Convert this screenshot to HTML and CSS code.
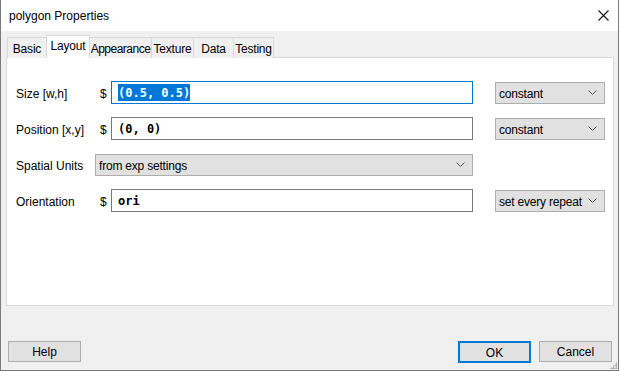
FILE: index.html
```html
<!DOCTYPE html>
<html lang="en">
<head>
  <meta charset="UTF-8">
  <title>polygon Properties</title>
  <link rel="stylesheet" href="styles.css">
</head>
<body>

<div class="window">
  <div class="titlebar">
    <span class="title">polygon Properties</span>
    <svg class="close" width="11" height="11" viewBox="0 0 11 11">
      <path d="M0.5 0.5 L10.5 10.5 M10.5 0.5 L0.5 10.5" stroke="#111" stroke-width="1.1" fill="none"/>
    </svg>
  </div>

  <div class="body">
    <ul class="tabs">
      <li class="tab tab-basic">Basic</li>
      <li class="tab tab-layout current">Layout</li>
      <li class="tab tab-appearance">Appearance</li>
      <li class="tab tab-texture">Texture</li>
      <li class="tab tab-data">Data</li>
      <li class="tab tab-testing">Testing</li>
    </ul>

    <div class="panel">
      <div class="form">
        <label class="lbl">Size [w,h]</label>
        <span class="dollar">$</span>
        <div class="field focus"><span class="sel">(0.5, 0.5)</span></div>
        <span></span>
        <div class="combo small"><span>constant</span>
          <svg class="chev" width="9" height="5" viewBox="0 0 9 5"><polyline points="0.5,0.5 4.5,4.5 8.5,0.5" fill="none" stroke="#555" stroke-width="1"/></svg>
        </div>

        <label class="lbl">Position [x,y]</label>
        <span class="dollar">$</span>
        <div class="field">(0, 0)</div>
        <span></span>
        <div class="combo small"><span>constant</span>
          <svg class="chev" width="9" height="5" viewBox="0 0 9 5"><polyline points="0.5,0.5 4.5,4.5 8.5,0.5" fill="none" stroke="#555" stroke-width="1"/></svg>
        </div>

        <label class="lbl">Spatial Units</label>
        <div class="combo wide"><span>from exp settings</span>
          <svg class="chev" width="9" height="5" viewBox="0 0 9 5"><polyline points="0.5,0.5 4.5,4.5 8.5,0.5" fill="none" stroke="#555" stroke-width="1"/></svg>
        </div>
        <span></span>
        <span></span>

        <label class="lbl">Orientation</label>
        <span class="dollar">$</span>
        <div class="field">ori</div>
        <span></span>
        <div class="combo small"><span>set every repeat</span>
          <svg class="chev" width="9" height="5" viewBox="0 0 9 5"><polyline points="0.5,0.5 4.5,4.5 8.5,0.5" fill="none" stroke="#555" stroke-width="1"/></svg>
        </div>
      </div>
    </div>

    <div class="footer">
      <button class="btn">Help</button>
      <div class="spacer"></div>
      <button class="btn default">OK</button>
      <button class="btn">Cancel</button>
    </div>
    <div class="grip"></div>
  </div>
</div>

</body>
</html>
```

FILE: styles.css
```css
* {
  margin: 0;
  padding: 0;
  list-style: none;
  box-sizing: border-box;
}

body {
  width: 620px;
  height: 371px;
  overflow: hidden;
  font-family: "Segoe UI", "Liberation Sans", Arial, sans-serif;
  font-size: 12px;
  color: #000;
  background-color: #fff;
}

.window {
  width: 619px;
  height: 371px;
  border: 1px solid #7a7a7a;
  border-top: none;
  background-color: #f0f0f0;
  display: flex;
  flex-direction: column;
}

.titlebar {
  height: 31px;
  background-color: #fff;
  display: flex;
  align-items: center;
  justify-content: space-between;
  padding: 0 9px 0 8px;
}

.title {
  font-size: 12px;
}

.close {
  display: block;
  margin-top: -1px;
}

.body {
  flex: 1;
  position: relative;
  padding: 5px 4px 0 5px;
}

/* tabs sit on top of the panel border */
.tabs {
  display: flex;
  height: 22px;
  padding-left: 2px;
  align-items: flex-end;
  position: relative;
  z-index: 1;
  margin-bottom: -1px;
  letter-spacing: -0.2px;
}

.tab {
  height: 21px;
  line-height: 21px;
  padding-top: 1px;
  text-align: center;
  white-space: nowrap;
  border: 1px solid #d9d9d9;
  border-bottom: none;
  margin-left: -1px;
  background-color: #f0f0f0;
}

.tab-basic { width: 40px; }
.tab-layout { width: 44px; }
.tab-appearance { width: 63px; letter-spacing: -0.5px; }
.tab-texture { width: 43px; }
.tab-data { width: 41px; }
.tab-testing { width: 41px; }

.tab.current {
  height: 23px;
  line-height: 20px;
  padding-top: 0;
  background-color: #fff;
  position: relative;
  z-index: 2;
}

.panel {
  height: 249px;
  background-color: #fff;
  border: 1px solid #d9d9d9;
  padding: 23px 9px 0 9px;
}

.form {
  display: grid;
  grid-template-columns: 79px 16px 362px 22px 110px;
  grid-auto-rows: 23px;
  row-gap: 13px;
  align-items: center;
}

.lbl {
  padding-top: 3px;
}

.dollar {
  padding-left: 5px;
  padding-top: 3px;
}

.field {
  height: 23px;
  border: 1px solid #7a7a7a;
  background-color: #fff;
  font-family: "DejaVu Sans Mono", "Liberation Mono", monospace;
  font-weight: bold;
  font-size: 12px;
  line-height: 22px;
  padding-left: 6px;
}

.field.focus {
  border-color: #0078d7;
}

.sel {
  background-color: #0078d7;
  color: #fff;
  padding: 2px 0 1px;
}

.combo {
  height: 22px;
  border: 1px solid #adadad;
  background-color: #e1e1e1;
  display: flex;
  align-items: center;
  justify-content: space-between;
  padding: 2px 7px 0 3px;
  white-space: nowrap;
  overflow: hidden;
}

.combo span {
  letter-spacing: -0.2px;
}

.combo.wide {
  grid-column: 2 / 4;
}

.chev {
  display: block;
  flex-shrink: 0;
  margin-top: -2px;
  margin-left: 3px;
}

.footer {
  display: flex;
  gap: 8px;
  margin-top: 35px;
  padding-left: 2px;
  padding-right: 2px;
}

.spacer {
  flex: 1;
}

.btn {
  width: 73px;
  height: 21px;
  border: 1px solid #adadad;
  background-color: #e1e1e1;
  font-family: "Segoe UI", "Liberation Sans", Arial, sans-serif;
  font-size: 12px;
  color: #000;
  padding-top: 1px;
}

.btn.default {
  border: 2px solid #0078d7;
  height: 22px;
}

/* resize grip dots */
.grip {
  position: absolute;
  right: 1px;
  bottom: 1px;
  width: 7px;
  height: 7px;
  background-image: radial-gradient(circle, #a0a0a0 0.9px, transparent 1px);
  background-size: 2.5px 2.5px;
  clip-path: polygon(100% 0, 100% 100%, 0 100%);
}
```
